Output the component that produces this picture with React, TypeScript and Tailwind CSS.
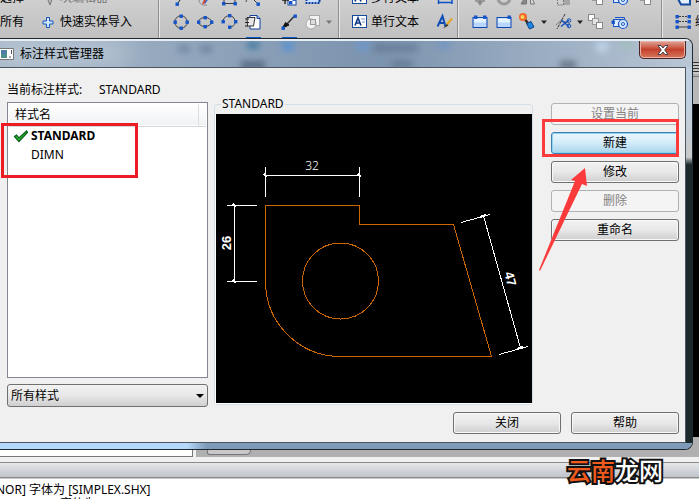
import { useState } from 'react';
import type { ReactNode } from 'react';
import clsx from 'clsx';

const BLUE = '#1453c8';
const LINE = '#3c3c3c';

function Icon({ children }: { children?: ReactNode }) {
  return (
    <svg width="24" height="24" viewBox="0 0 24 24" fill="none" className="shrink-0">
      {children}
    </svg>
  );
}

function Dots({ at }: { at: number[][] }) {
  return (
    <>
      {at.map(([x, y]) => (
        <rect key={`${x}-${y}`} x={x - 1.5} y={y - 1.5} width="3.4" height="3.4" fill={BLUE} />
      ))}
    </>
  );
}

function Caret({ muted }: { muted?: boolean }) {
  return (
    <svg width="8" height="24" viewBox="0 0 8 24" className="shrink-0">
      <path d="M1 10.5h6L4 14z" fill={muted ? '#777' : '#222'} />
    </svg>
  );
}

const CircleIcon = () => (
  <Icon>
    <circle cx="12" cy="12" r="6.2" stroke={LINE} />
    <Dots at={[[12, 6], [18, 12], [12, 18], [6, 12]]} />
  </Icon>
);

const EllipseIcon = () => (
  <Icon>
    <ellipse cx="12" cy="12" rx="6.5" ry="4.5" stroke={LINE} />
    <Dots at={[[12, 7.5], [18.5, 12], [12, 16.5], [5.5, 12]]} />
  </Icon>
);

const ArcIcon = () => (
  <Icon>
    <path d="M6 10.500C8 4 17 4 18 11c0 4-2 6-5 6" stroke={LINE} />
    <Dots at={[[6, 11.5], [12.5, 5.5], [18.5, 11.5], [12.5, 17]]} />
  </Icon>
);

const PasteIcon = () => (
  <Icon>
    <path d="M9 5.5h7l3 3V19H9z" fill="#fff" stroke="#10409c" />
    <path d="M16 5.5v3h3" fill="#9bb9ee" stroke="#10409c" />
    <path d="M6 7.500h8L12.500 16H6.500z" fill="#e6e6e6" stroke="#333" />
    <path d="M4 9h4M4 12.500h4M4 16h3" stroke="#222" />
  </Icon>
);

const BrushArrowIcon = () => (
  <Icon>
    <path d="M17 6.5L10 14" stroke="#333" strokeWidth="1.5" />
    <path d="M5.500 18l3-5.500L12 15z" fill="#111" stroke="#111" />
    <Dots at={[[18, 6], [6, 18]]} />
  </Icon>
);

const UnionIcon = () => (
  <Icon>
    <rect x="8.500" y="5.500" width="10" height="10" fill="#f2f2f2" stroke="#aaa" />
    <circle cx="10" cy="14" r="5" fill="#f4f4f4" stroke="#aaa" />
    <rect x="9.500" y="9.500" width="5" height="5" fill="#ddd" stroke="#999" />
  </Icon>
);

const TextIcon = () => (
  <svg width="15" height="24" viewBox="0 0 15 24" className="shrink-0">
    <rect x=".5" y="5.5" width="14" height="12" fill="#fff" stroke="#17499d" />
    <path d="M3 15.5L6 8l3 7.5M4.2 13h3.6" fill="none" stroke="#0d3785" strokeWidth="1.6" />
    <path d="M9 9h4M10 12h3" stroke="#6d8fc7" />
  </svg>
);

const StyleIcon = () => (
  <Icon>
    <path d="M4.500 16.500L9.500 6l3 10.500M6.500 13h5.500" stroke="#0e4cb8" strokeWidth="2" />
    <path d="M19 8.500L13.500 15" stroke="#e7a422" strokeWidth="2.2" />
    <path d="M14 14l-4 4.500 5.500-3z" fill="#333" />
  </Icon>
);

const BlockIcon = ({ middle }: { middle?: boolean }) => (
  <Icon>
    <rect x="5" y="7.5" width="14" height="10" fill="#b9d7fb" stroke="#0d47b5" />
    <path d="M6 8.5h12v4H6z" fill="#e4f1ff" />
    <Dots at={middle ? [[7.500, 7], [16.500, 7]] : [[17, 7]]} />
  </Icon>
);

const SprayIcon = () => (
  <Icon>
    <circle cx="7" cy="7" r="4" fill="#f0682c" />
    <circle cx="6.500" cy="7" r="2" fill="#ffd35e" />
    <path d="M9.500 10l3 4" stroke="#3c2618" strokeWidth="2.4" />
    <path d="M10.500 13.500l4.500-2 3 5.500-4.500 2z" fill="#1c86e0" stroke="#0c3f86" />
  </Icon>
);

const TrimIcon = () => (
  <Icon>
    <path d="M13 4L5 19" stroke="#333" strokeDasharray="3 1" />
    <path d="M4 15c4-5 7-5 14-1" stroke="#777" />
    <path d="M9 10l8 6.500M17 10l-8 6.500" stroke="#1753c0" strokeWidth="1.6" />
    <circle cx="17" cy="10.500" r="1.800" stroke="#1753c0" />
    <circle cx="17" cy="16" r="1.800" stroke="#1753c0" />
  </Icon>
);

const CascadeIcon = () => (
  <Icon>
    <rect x="4.500" y="4.500" width="6" height="6" fill="#fff" stroke="#888" />
    <rect x="8.500" y="8.500" width="6" height="6" fill="#e5e5e5" stroke="#999" />
    <rect x="12.500" y="12.500" width="6" height="6" fill="#fff" stroke="#888" />
  </Icon>
);

const LinkIcon = () => (
  <Icon>
    <path d="M7 7.500h9.500v5" stroke={BLUE} />
    <path d="M5.500 16.500v-7H14" stroke={BLUE} />
    <rect x="5.500" y="9.500" width="9" height="7" fill="#dcebff" stroke={BLUE} />
    <circle cx="15" cy="14" r="4.500" fill="#d3e6ff" stroke={BLUE} strokeWidth="1.2" />
    <circle cx="15" cy="14" r="1.500" fill="#fff" stroke={BLUE} />
    <Dots at={[[5, 12]]} />
  </Icon>
);

const LinetypeIcon = () => (
  <Icon>
    <path d="M5 6.500h14M5 11.500h14" stroke={LINE} strokeDasharray="2 1" />
    <path d="M5 17h14" stroke={LINE} />
    <Dots at={[[6, 6.5], [18, 6.5], [6, 11.5], [18, 11.5], [6, 17], [18, 17]]} />
  </Icon>
);

const PlusIcon = () => (
  <Icon>
    <path d="M10.500 7.500h3v3.500h3.500v3h-3.500v3.500h-3V14H7v-3h3.500z" fill="#cfe6ff" stroke="#1556b8" />
  </Icon>
);

const EditorIcon = () => (
  <Icon>
    <path d="M10 9l10 1-4 3-2 6z" fill="#bbb" stroke="#777" />
  </Icon>
);

const SlashIcon = () => (
  <Icon>
    <path d="M15 8L9 17" stroke="#222" />
    <Dots at={[[8, 18]]} />
  </Icon>
);

const PencilIcon = () => (
  <Icon>
    <path d="M17 8l-6 9" stroke="#2c6bd2" strokeWidth="3" />
    <path d="M13 12l-3 6" stroke="#d34a3c" strokeWidth="2" />
    <path d="M6 14c0 4 4 6 8 5" stroke="#888" />
  </Icon>
);

const RectIcon = () => (
  <Icon>
    <path d="M7 8v9.500h11V8" stroke={LINE} />
    <Dots at={[[6.500, 17.5], [18, 17.5]]} />
  </Icon>
);

const PolyIcon = () => (
  <Icon>
    <path d="M5 16c1-5 4-8 7-3l5 5" stroke={LINE} />
    <Dots at={[[11, 12], [17, 18]]} />
  </Icon>
);

const GridIcon = () => (
  <Icon>
    <rect x="11" y="10" width="8" height="9" fill="#fff" stroke="#12469f" />
    <path d="M5 14h7M8 10v8" stroke="#222" strokeWidth="1.4" />
    <Dots at={[[13.500, 16.5], [17, 13]]} />
  </Icon>
);

const RegionIcon = () => (
  <Icon>
    <rect x="5.500" y="6" width="13" height="11" fill="#c9e0ff" stroke="#0d3f9d" strokeWidth="2" strokeDasharray="2 1" />
  </Icon>
);

const MoveIcon = () => (
  <Icon>
    <path d="M12 8v10M10 16l2 2.500 2-2.500M7 15h10" stroke="#8a8a8a" strokeWidth="1.500" />
  </Icon>
);

const RotateIcon = () => (
  <Icon>
    <path d="M6 12a6 6 0 0 0 12 0" stroke="#999" strokeWidth="3" />
  </Icon>
);

const MirrorIcon = () => (
  <Icon>
    <path d="M5 18L10.500 9v9z" fill="#888" stroke="#777" />
    <path d="M18.500 18l-4-9v9z" fill="#ddd" stroke="#777" />
  </Icon>
);

const StretchIcon = () => (
  <Icon>
    <rect x="5.500" y="8" width="6" height="11" stroke="#777" strokeDasharray="2 1" />
    <path d="M12 8h6v11h-6z" fill="#a5a5a5" />
  </Icon>
);

const DimIcon = () => (
  <Icon>
    <path d="M5.500 8v10M19 8v10M5.500 16.500H19" stroke="#0d4fc4" strokeWidth="1.500" />
  </Icon>
);

const LayerIcon = () => (
  <Icon>
    <path d="M6 11l4 7.500h9V10" fill="#e5f0ff" stroke="#17499d" strokeWidth="2" />
  </Icon>
);

const HatchIcon = () => (
  <Icon>
    <rect x="5.500" y="3.500" width="14" height="14" fill="#58a8ee" stroke="#0d5cc8" />
  </Icon>
);

const Separator = () => <div className="w-0.5 shrink-0 border-l border-[#8f8f8f] bg-[#e6e6e6]" />;

function Ribbon() {
  return (
    <div className="h-[76px] overflow-hidden bg-linear-to-b from-[#cfcfcf] to-[#b2b2b2]">
      <div className="-mt-3.5 flex h-24 leading-6 whitespace-nowrap">
        <div className="w-[158px] shrink-0">
          <div className="flex">
            <span className="w-9">选择</span>
            <EditorIcon />
            <span className="text-[#777]">块编辑器</span>
          </div>
          <div className="flex">
            <span className="w-9">所有</span>
            <PlusIcon />
            <span>快速实体导入</span>
          </div>
        </div>
        <Separator />
        <div className="w-[178px] shrink-0 pl-[9px]">
          <div className="flex">
            <SlashIcon />
            <PencilIcon />
            <RectIcon />
            <PolyIcon />
            <div className="w-3"><Caret /></div>
            <GridIcon />
            <RegionIcon />
            <Caret />
          </div>
          <div className="flex">
            <CircleIcon />
            <EllipseIcon />
            <ArcIcon />
            <PasteIcon />
            <div className="w-3" />
            <BrushArrowIcon />
            <UnionIcon />
            <Caret muted />
          </div>
          <div className="flex pl-[72px]">
            <HatchIcon />
            <div className="w-3" />
            <HatchIcon />
          </div>
        </div>
        <Separator />
        <div className="w-[117px] shrink-0 pl-3">
          <div className="flex">
            <TextIcon />
            <span className="w-[66px] pl-1">多行文本</span>
            <DimIcon />
          </div>
          <div className="flex">
            <TextIcon />
            <span className="w-[66px] pl-1">单行文本</span>
            <StyleIcon />
          </div>
        </div>
        <Separator />
        <div className="w-[202px] shrink-0 pl-[9px]">
          <div className="flex">
            <MoveIcon />
            <RotateIcon />
            <MirrorIcon />
            <div className="w-3" />
            <StretchIcon />
            <Caret muted />
            <CascadeIcon />
            <LinkIcon />
            <CascadeIcon />
          </div>
          <div className="flex">
            <BlockIcon middle />
            <BlockIcon />
            <SprayIcon />
            <div className="w-3"><Caret /></div>
            <TrimIcon />
            <Caret />
            <CascadeIcon />
            <LinkIcon />
          </div>
        </div>
        <Separator />
        <div className="shrink-0 pl-2">
          <div className="flex">
            <LayerIcon />
            <span>图层</span>
          </div>
          <div className="flex">
            <LinetypeIcon />
            <span>编辑</span>
          </div>
          <div className="mt-7 h-3 bg-[repeating-linear-gradient(#333_0_1px,#c4c4c4_1px_3px)]" />
        </div>
      </div>
    </div>
  );
}

function Preview() {
  return (
    <svg
      viewBox="216 114 316 289"
      className="block h-[289px] w-full bg-black"
      fill="none"
      shapeRendering="crispEdges"
      role="img"
      aria-label="STANDARD"
    >
      {/* part outline */}
      <g stroke="#cc6600">
        <path d="M340.500 356.500A75 75 0 0 1 265.500 281.500V205.500H359.500V224.500H453.500L491.500 356.500Z" />
        <circle cx="340.500" cy="281" r="38" />
      </g>
      {/* dimensions */}
      <g stroke="#fff">
        <path d="M265.500 167V197M359.500 167V197M265 175.500H360" />
        <path d="M227 205.500H257M227 281.500H257M234.500 205V282" />
        <path d="M461 222.500L490 214.500M499 354.500L528 346.500M483.500 216L520.500 348" />
        <path d="M264 174l3 3M358 174l3 3M233 204l3 3M233 280l3 3M480 217l6-2M517 349l6-2" strokeWidth="2" />
      </g>
      <g fill="#fff" textAnchor="middle">
        <text x="312" y="170" className="font-['Noto_Sans'] text-[12px] font-light">32</text>
        <text transform="translate(231 243) rotate(-90)" className="font-['Liberation_Sans'] text-[13px] font-bold">26</text>
        <text transform="translate(506 280) rotate(75)" className="font-['Liberation_Sans'] text-[13px] font-bold">47</text>
      </g>
    </svg>
  );
}

type PushButtonProps = { children: ReactNode; active?: boolean; disabled?: boolean; onClick?: () => void };

function PushButton({ children, active, disabled, onClick }: PushButtonProps) {
  return (
    <button
      type="button"
      disabled={disabled}
      onClick={onClick}
      className={clsx(
        'h-[22px] rounded-[3px] border text-center leading-5',
        disabled && 'border-[#adb2b5] bg-[#f4f4f4] text-[#838383]',
        active && 'border-[#3c7fb1] bg-linear-to-b from-[#eaf6fd] via-[#d5edfa] via-45% to-[#a9d5ec] inset-ring inset-ring-[#8ed4f0]',
        !disabled && !active && 'border-[#707070] bg-linear-to-b from-[#f2f2f2] via-[#e8e8e8] via-50% to-[#cfcfcf] inset-ring inset-ring-[#f8f8f8]',
      )}
    >
      {children}
    </button>
  );
}

function StyleList({ selected, onSelect }: { selected: string; onSelect: (name: string) => void }) {
  return (
    <div className="relative mt-1 h-[276px] border border-[#828790] bg-white p-px">
      <table className="w-full">
        <thead>
          <tr className="h-[22px] border-b border-[#d5d5d5] bg-linear-to-b from-white to-[#f1f2f4]">
            <th scope="col" className="pl-1.5 text-left font-normal">样式名</th>
            <th className="w-2 border-l border-[#dedfe1]" />
          </tr>
        </thead>
        <tbody>
          {['STANDARD', 'DIMN'].map((name) => (
            <tr key={name} className="h-[19px]" onClick={() => onSelect(name)}>
              <td className={clsx('leading-[18px]', name === selected && 'font-bold')}>
                <div className="flex items-center pl-1">
                  <span className="w-[18px]">
                    {name === selected && (
                      <svg width="16" height="14" viewBox="0 0 16 14">
                        <path d="M1.500 7.500L3.500 6l2.500 3 7.500-7 1 1.500L6 12.500z" fill="#2fbb35" stroke="#0b5f1b" strokeWidth="1.200" />
                      </svg>
                    )}
                  </span>
                  {name}
                </div>
              </td>
              <td />
            </tr>
          ))}
        </tbody>
      </table>
      <div className="pointer-events-none absolute top-5 -left-[7px] h-[55px] w-[137px] border-3 border-[#ed1c24]" />
    </div>
  );
}

function TitleBar() {
  return (
    <div className="relative flex h-7 items-center overflow-hidden border-t-2 border-[#e6edf4] bg-linear-to-r from-[#a9b9ca] via-[#7b93ae] via-55% to-[#b9c6d5]">
      {/* toolbar shapes showing through the glass */}
      <div className="absolute top-1 left-0 h-4 w-32 rounded-full bg-[#c4cfda] blur-md" />
      <div className="absolute top-1 left-[178px] h-2 w-3 bg-[#667d99] opacity-60 blur-[3px]" />
      <div className="absolute top-1 left-[200px] h-2 w-3 bg-[#5f7793] opacity-60 blur-[3px]" />
      <div className="absolute top-0 left-[247px] h-2 w-3 bg-[#3c789f] opacity-80 blur-[3px]" />
      <div className="absolute top-5 left-[241px] h-2 w-6 bg-[#4c6178] opacity-80 blur-[3px]" />
      <div className="absolute top-0 left-[282px] h-2.5 w-3 bg-[#5792d6] opacity-80 blur-[3px]" />
      <div className="absolute top-0 left-[357px] h-2.5 w-3 bg-[#6c98d4] opacity-70 blur-[3px]" />
      <div className="absolute top-1 left-[374px] h-1.5 w-11 bg-[#566b84] opacity-60 blur-[3px]" />
      <div className="absolute top-5 left-[392px] h-1.5 w-5 bg-[#566b84] opacity-70 blur-[3px]" />
      <div className="absolute top-0 left-[438px] h-2 w-3 bg-[#6c93c8] opacity-70 blur-[3px]" />
      <div className="absolute top-5 left-[560px] h-2 w-4 bg-[#5b6979] opacity-80 blur-[3px]" />
      <div className="absolute top-0 left-[596px] h-3 w-3 bg-[#c4d9ee] opacity-70 blur-[3px]" />
      <div className="absolute top-0 left-[621px] h-2 w-3 bg-[#9cc0b4] opacity-70 blur-[3px]" />
      <svg width="14" height="14" viewBox="0 0 14 14" className="relative shrink-0">
        <path d="M0 1.500h13.500v11H0" fill="#fff" stroke="#777" />
        <path d="M1 3h6v8H1z" fill="#4d8f8a" />
        <path d="M1 3h5v4H1z" fill="#4d7cab" />
        <path d="M11.500 3v4M9 10h2" stroke="#456" />
      </svg>
      <h1 className="relative flex-1 pl-1.5">标注样式管理器</h1>
      <button
        type="button"
        aria-label="Close"
        className="relative mr-1.5 flex h-[18px] w-[47px] items-center justify-center self-start rounded-b-[5px] border border-t-0 border-[#4d2323] bg-linear-to-b from-[#e0a59a] via-[#c3402b] via-50% to-[#d7765c] inset-ring inset-ring-[#eab3a6]"
      >
        <svg width="12" height="10" viewBox="0 0 12 10">
          <path d="M1 .5h3l2 2.500 2-2.500h3L7.700 5 11 9.500H8L6 7 4 9.500H1L4.300 5z" fill="#fff" stroke="#46414f" />
        </svg>
      </button>
    </div>
  );
}

function StyleManager() {
  const [selected, setSelected] = useState('STANDARD');

  return (
    <div role="dialog" className="absolute top-[38px] right-1.5 left-0 overflow-hidden rounded-tr-lg rounded-br-lg border-y border-r border-[#1f2932]">
      <TitleBar />
      <div className="flex">
        <div className="min-w-0 flex-1 border-y border-r border-[#4a5560] bg-[#f0f0f0] pt-3.5 pr-1.5 pb-2 pl-[7px]">
          <div className="flex">
            <div className="w-[201px] shrink-0">
              <div className="flex h-4 leading-4">
                <span className="w-[92px]">当前标注样式:</span>
                <span>{selected}</span>
              </div>
              <StyleList selected={selected} onSelect={setSelected} />
              <div className="relative mt-1.5">
                <select
                  aria-label="样式"
                  className="block h-[23px] w-full appearance-none rounded-[3px] border border-[#707070] bg-linear-to-b from-[#f2f2f2] via-[#e8e8e8] via-50% to-[#cfcfcf] pl-[3px]"
                >
                  <option>所有样式</option>
                </select>
                <svg width="8" height="4" viewBox="0 0 8 4" className="pointer-events-none absolute top-2.5 right-1">
                  <path d="M0 0h8L4 4z" fill="#000" />
                </svg>
              </div>
            </div>
            <fieldset className="mt-3.5 ml-1.5 min-w-0 flex-1 self-start rounded-[3px] border border-[#d5dfe5] pt-0.5">
              <legend className="ml-1.5 px-px leading-4">{selected}</legend>
              <div className="border-b border-l border-white">
                <Preview />
              </div>
            </fieldset>
            <div className="relative mt-[21px] ml-[18px] flex w-32 shrink-0 flex-col gap-[7px]">
              <PushButton disabled>设置当前</PushButton>
              <PushButton active>新建</PushButton>
              <PushButton>修改</PushButton>
              <PushButton disabled>删除</PushButton>
              <PushButton>重命名</PushButton>
              <div className="pointer-events-none absolute top-4 -left-[9px] h-[38px] w-[137px] border-3 border-[#fb3b3b]" />
              <svg width="50" height="104" viewBox="0 0 50 104" className="pointer-events-none absolute top-16 -left-3">
                <path d="M0 103L36 14l-4-1L46 1l2 18-5-2L1 104z" fill="#fb3b3b" />
              </svg>
            </div>
          </div>
          <div className="mt-[5px] flex justify-end gap-2.5">
            <div className="grid w-[108px]"><PushButton>关闭</PushButton></div>
            <div className="grid w-[108px]"><PushButton>帮助</PushButton></div>
          </div>
        </div>
        <div className="w-1.5 bg-linear-to-b from-[#c0cfdf] from-10% via-[#c8c8c8] via-24% to-[#1c2a2e] to-26%" />
      </div>
      <div className="h-1.5 bg-linear-to-r from-[#b5d9fa] from-27% to-[#7f99b8] to-30%" />
    </div>
  );
}

export default function App() {
  return (
    <main className="relative flex min-h-screen flex-col overflow-hidden bg-white font-['Noto_Sans','Noto_Sans_CJK_SC',sans-serif] text-[12px] text-black">
      <Ribbon />
      <div className="h-7 border-t border-[#777] bg-[#b8b8b8]" />
      <div className="h-[333px] bg-black" />
      <div className="flex h-5 bg-[#b0b0b0]">
        <div className="w-[193px] border-r border-b border-[#777] bg-white" />
        <div className="w-[3px] bg-[#f0f0f0]" />
        <div className="ml-3 h-[18px] w-11 -skew-x-12 rounded-b border border-[#777] bg-[#c8c8c8]" />
      </div>
      <div className="h-[5px] bg-[#f0f0f0]" />
      <div className="h-4 border-y border-[#8a8a8a] bg-linear-to-b from-[#e6e7e9] to-[#bfc4cc]" />
      <div className="h-[21px] overflow-hidden border-t border-[#c8c8c8] whitespace-nowrap">
        <p className="-ml-1 pt-0.5 leading-[17px]">NOR] 字体为 [SIMPLEX.SHX]</p>
        <p className="pl-[60px] leading-3">字体为</p>
      </div>
      <StyleManager />
      <p className="absolute right-9 bottom-3 text-[24px] leading-8 font-medium text-white [-webkit-text-stroke:4px_#111] [paint-order:stroke_fill]">
        <span className="text-[#f15a1d]">云南</span>龙网
      </p>
    </main>
  );
}
